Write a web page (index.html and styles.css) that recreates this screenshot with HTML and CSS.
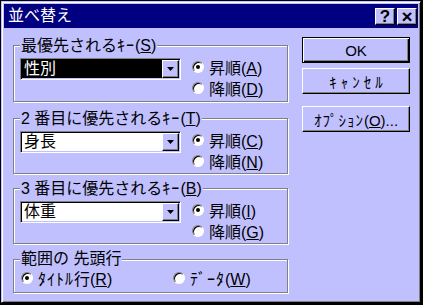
FILE: index.html
```html
<!DOCTYPE html>
<html lang="ja">
<head>
<meta charset="utf-8">
<link rel="stylesheet" href="styles.css">
</head>
<body>
<div class="window">
  <div class="titlebar">
    <span class="title">並べ替え</span>
    <div class="tbtns">
      <span class="tbtn">?</span>
      <span class="tbtn x">×</span>
    </div>
  </div>
  <div class="content">
    <div class="left">
      <fieldset class="group g1">
        <legend>最優先される<span class="hk">ｷｰ</span>(<u>S</u>)</legend>
        <div class="row">
          <div class="combo"><span class="ctext sel">性別</span><span class="drop"><svg width="7" height="4" viewBox="0 0 7 4"><polygon points="0,0 7,0 3.5,4" fill="#000"/></svg></span></div>
          <div class="radios">
            <div class="radio"><span class="dot on"></span><span>昇順(<u>A</u>)</span></div>
            <div class="radio"><span class="dot"></span><span>降順(<u>D</u>)</span></div>
          </div>
        </div>
      </fieldset>
      <fieldset class="group g2">
        <legend>2 番目に優先される<span class="hk">ｷｰ</span>(<u>T</u>)</legend>
        <div class="row">
          <div class="combo"><span class="ctext">身長</span><span class="drop"><svg width="7" height="4" viewBox="0 0 7 4"><polygon points="0,0 7,0 3.5,4" fill="#000"/></svg></span></div>
          <div class="radios">
            <div class="radio"><span class="dot on"></span><span>昇順(<u>C</u>)</span></div>
            <div class="radio"><span class="dot"></span><span>降順(<u>N</u>)</span></div>
          </div>
        </div>
      </fieldset>
      <fieldset class="group g3">
        <legend>3 番目に優先される<span class="hk">ｷｰ</span>(<u>B</u>)</legend>
        <div class="row">
          <div class="combo"><span class="ctext">体重</span><span class="drop"><svg width="7" height="4" viewBox="0 0 7 4"><polygon points="0,0 7,0 3.5,4" fill="#000"/></svg></span></div>
          <div class="radios">
            <div class="radio"><span class="dot on"></span><span>昇順(<u>I</u>)</span></div>
            <div class="radio"><span class="dot"></span><span>降順(<u>G</u>)</span></div>
          </div>
        </div>
      </fieldset>
      <fieldset class="group g4">
        <legend>範囲の 先頭行</legend>
        <div class="row hrow">
          <div class="radio wide"><span class="dot on"></span><span><span class="hk">ﾀｲﾄﾙ</span>行(<u>R</u>)</span></div>
          <div class="radio"><span class="dot"></span><span><span class="hk">ﾃﾞｰﾀ</span>(<u>W</u>)</span></div>
        </div>
      </fieldset>
    </div>
    <div class="right">
      <div class="btn default">OK</div>
      <div class="btn"><span class="hk cancel">ｷｬﾝｾﾙ</span></div>
      <div class="btn opt"><span><span class="hk">ｵﾌﾟｼｮﾝ</span>(<u>O</u>)...</span></div>
    </div>
  </div>
</div>
</body>
</html>
```

FILE: styles.css
```css
* { box-sizing: border-box; }
html, body {
  margin: 0;
  padding: 0;
  background: #000;
  width: 423px;
  height: 305px;
  overflow: hidden;
}
body {
  font-family: "Liberation Sans", "Noto Sans CJK JP", sans-serif;
  font-size: 16px;
  color: #000;
}
.hk {
  font-family: "Noto Sans CJK JP", sans-serif;
  letter-spacing: 1px;
}
.hk.cancel { letter-spacing: 4px; margin-right: -4px; }
.window {
  margin: 1px 0 0 1px;
  width: 420px;
  height: 302px;
  background: #c0c0ff;
  border: 1px solid;
  border-color: #c0c0ff #000 #000 #c0c0ff;
  box-shadow: inset 1px 1px 0 #fff, inset -1px -1px 0 #808080;
  padding: 2px;
  display: flex;
  flex-direction: column;
}
.titlebar {
  height: 24px;
  background: #000080;
  display: flex;
  align-items: center;
  justify-content: space-between;
  padding: 0 1px 0 4px;
}
.title {
  color: #fff;
  font-size: 16px;
  line-height: 24px;
}
.tbtns {
  display: flex;
  gap: 2px;
}
.tbtn {
  width: 20px;
  height: 17px;
  background: #c0c0ff;
  border: 1px solid;
  border-color: #fff #000 #000 #fff;
  box-shadow: inset -1px -1px 0 #808080;
  display: flex;
  align-items: center;
  justify-content: center;
  font-weight: bold;
  font-size: 17px;
  line-height: 1;
}
.tbtn.x { font-size: 19px; }
.content {
  flex: 1;
  display: flex;
  padding: 8px 0 0 9px;
}
.left {
  width: 275px;
  display: flex;
  flex-direction: column;
}
.group {
  margin: 0;
  padding: 0;
  border: 1px solid #808080;
  box-shadow: inset 1px 1px 0 #fff, 1px 1px 0 #fff;
  min-width: 0;
}
.group legend {
  margin-left: 6px;
  padding: 0 1px;
  font-size: 16px;
  line-height: 16px;
  background: #c0c0ff;
}
.g1 { height: 66px; }
.g2 { height: 65px; margin-top: 7px; }
.g3 { height: 65px; margin-top: 5px; }
.g4 { height: 42px; margin-top: 7px; }
.row {
  display: flex;
  padding: 4px 0 0 6px;
}
.combo {
  width: 161px;
  height: 22px;
  border: 1px solid;
  border-color: #808080 #fff #fff #808080;
  box-shadow: inset 1px 1px 0 #000, inset -1px -1px 0 #c0c0ff;
  padding: 1px;
  background: #fff;
  display: flex;
}
.ctext {
  flex: 1;
  line-height: 18px;
  padding-left: 2px;
  font-size: 16px;
}
.ctext.sel {
  background: #000;
  color: #fff;
}
.drop {
  width: 17px;
  height: 18px;
  background: #c0c0ff;
  border: 1px solid;
  border-color: #fff #000 #000 #fff;
  box-shadow: inset -1px -1px 0 #808080;
  display: flex;
  align-items: center;
  justify-content: center;
}
.drop svg { display: block; }
.radios {
  margin: -2px 0 0 11px;
  display: flex;
  flex-direction: column;
}
.radio {
  height: 21px;
  display: flex;
  align-items: center;
  gap: 5px;
  font-size: 16px;
  white-space: nowrap;
}
.dot {
  width: 12px;
  height: 12px;
  border-radius: 50%;
  border: 1px solid;
  border-color: #808080 #fff #fff #808080;
  box-shadow: inset 1px 1px 0 #000;
  background: #fff;
  display: flex;
  align-items: center;
  justify-content: center;
  flex: none;
}
.dot.on::after {
  content: "";
  width: 4px;
  height: 4px;
  border-radius: 50%;
  background: #000;
}
.hrow {
  padding: 0 0 0 7px;
}
.radio.wide { width: 152px; }
.right {
  margin: 1px 0 0 14px;
  display: flex;
  flex-direction: column;
}
.btn {
  width: 108px;
  height: 26px;
  border: 1px solid;
  border-color: #fff #000 #000 #fff;
  box-shadow: inset -1px -1px 0 #808080;
  display: flex;
  align-items: center;
  justify-content: center;
  font-size: 15px;
  margin-bottom: 5px;
}
.btn.default {
  border-color: #000;
  box-shadow: inset 1px 1px 0 #fff, inset -1px -1px 0 #000, inset -2px -2px 0 #808080;
}
.btn.opt { margin-top: 7px; }
```
